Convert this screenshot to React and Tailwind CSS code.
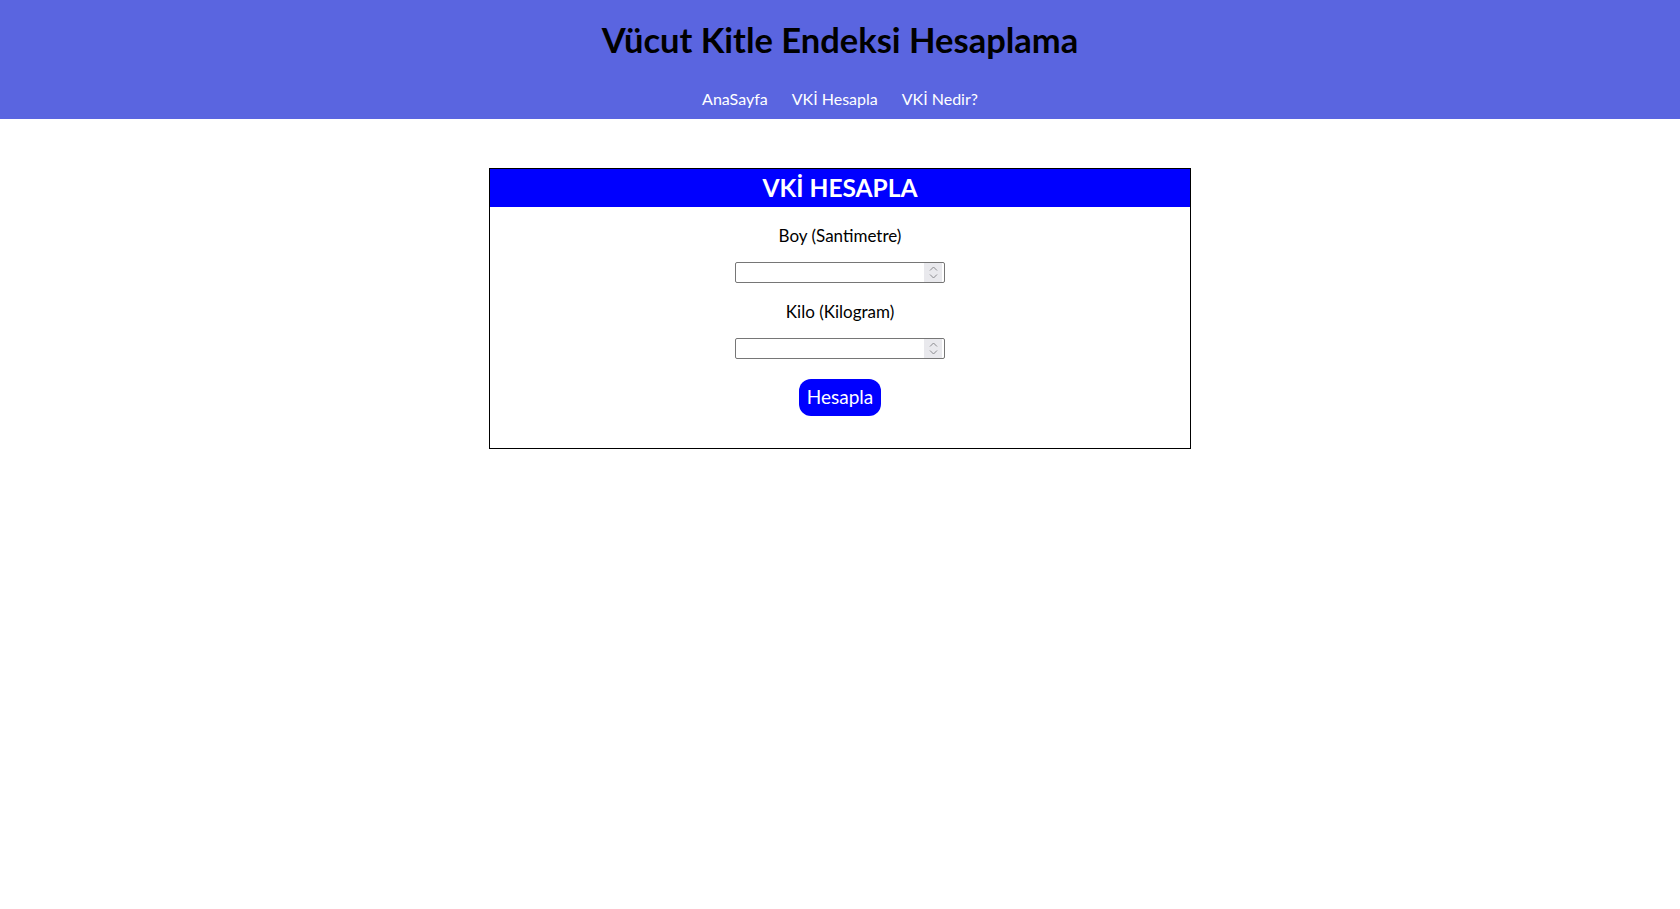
function NumberField() {
  return (
    <div className="flex items-center w-[210px] h-[21px] border border-[#767676] rounded-[2px] bg-white pr-[2px]">
      <input type="text" className="flex-1 min-w-0 h-full px-1 text-sm outline-none" />
      <div className="w-[18px] h-[19px] bg-[#e9e9ed] flex flex-col items-center justify-center gap-[3px]">
        <svg width="9" height="5" viewBox="0 0 9 5" fill="none">
          <path d="M1 4.5 4.5 1 8 4.5" stroke="#8a8a8e" strokeWidth="1" />
        </svg>
        <svg width="9" height="5" viewBox="0 0 9 5" fill="none">
          <path d="M1 0.5 4.5 4 8 0.5" stroke="#8a8a8e" strokeWidth="1" />
        </svg>
      </div>
    </div>
  );
}

export default function App() {
  const font = { fontFamily: "Lato, 'Noto Sans', sans-serif" };
  return (
    <div className="min-h-screen bg-white" style={font}>
      <header className="bg-[#5a65e0] h-[119px] flex flex-col items-center">
        <h1 className="text-[34.5px] font-bold text-black leading-[40px] mt-[20px]">
          Vücut Kitle Endeksi Hesaplama
        </h1>
        <nav className="flex gap-[24px] mt-[27px] text-white text-[16px] leading-[24px]">
          <a href="#">AnaSayfa</a>
          <a href="#">VKİ Hesapla</a>
          <a href="#">VKİ Nedir?</a>
        </nav>
      </header>

      <div className="w-[702px] mx-auto mt-[49px] border border-black">
        <div className="bg-[#0000ff] h-[38px] flex items-center justify-center">
          <h2 className="text-white text-[24.5px] font-bold">VKİ HESAPLA</h2>
        </div>
        <div className="flex flex-col items-center pt-[17px] pb-[32px]">
          <label className="text-[17px] leading-[24px] text-black">Boy (Santimetre)</label>
          <div className="mt-[14px]">
            <NumberField />
          </div>
          <label className="mt-[17px] text-[17px] leading-[24px] text-black">Kilo (Kilogram)</label>
          <div className="mt-[14px]">
            <NumberField />
          </div>
          <button
            type="button"
            className="mt-[20px] h-[37px] px-[8px] bg-[#0000ff] text-white text-[19px] rounded-[12px]"
          >
            Hesapla
          </button>
        </div>
      </div>
    </div>
  );
}
